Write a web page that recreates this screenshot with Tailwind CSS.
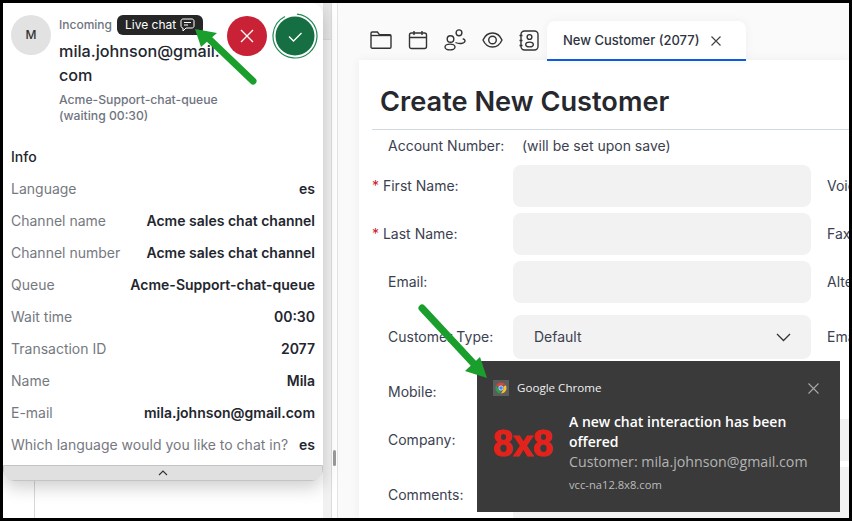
<!DOCTYPE html>
<html lang="en">
<head>
  <meta charset="UTF-8" />
  <title>New Customer</title>
  <script src="https://cdn.jsdelivr.net/npm/@tailwindcss/browser@4"></script>
</head>
<body class="bg-black font-['Inter',sans-serif]">
  <div class="relative flex w-[852px] h-[521px] box-border border-[3px] border-black overflow-hidden bg-white">

    <!-- behind the chat panel -->
    <div class="relative flex w-[329px] h-full shrink-0 border-r border-[#dcdcdc]">
      <div class="w-[32px] h-full border-r border-[#d8d8d8]"></div>
      <div class="flex-1"></div>
      <div class="flex flex-col w-[8px] h-full bg-[#f1f1f1]">
        <div class="h-[37px] bg-[#e6e6e6] border-b border-[#dcdcdc]"></div>
      </div>
    </div>
    <div class="relative w-[6px] h-full shrink-0 border-r border-[#e4e4e4]">
      <div class="absolute left-[1px] top-[447px] w-[3px] h-[16px] bg-[#9a9a9a] rounded-sm"></div>
    </div>

    <!-- main area -->
    <div class="flex flex-col flex-1 min-w-0 bg-[#fafafa]">
      <div class="relative z-10 flex items-end h-[58px] shrink-0 pl-[32px]">
        <div class="flex items-center gap-[16px] h-[36px] mb-[3px] text-[#333]">
          <svg width="22" height="20" viewBox="0 0 22 20" fill="none" stroke="currentColor" stroke-width="1.4"><path d="M1 17V3.2C1 2.5 1.5 2 2.2 2h5.2l2 2.6h10.4c.7 0 1.2.5 1.2 1.2V17c0 .7-.5 1.2-1.2 1.2H2.200C1.500 18.200 1 17.700 1 17Z"/><path d="M1 5.500h20"/></svg>
          <svg width="20" height="20" viewBox="0 0 20 20" fill="none" stroke="currentColor" stroke-width="1.4"><rect x="1.500" y="3" width="17" height="15.500" rx="2"/><path d="M1.500 7.500h17M6 1v4M14 1v4"/></svg>
          <svg width="22" height="22" viewBox="0 0 22 22" fill="none" stroke="currentColor" stroke-width="1.400"><circle cx="15" cy="3.800" r="2.900"/><circle cx="6.500" cy="10" r="3.300"/><ellipse cx="6" cy="18" rx="5" ry="2.900"/><path d="M11.500 13.500c3.500 1.800 9 1.300 9.500-1.500.2-1.200-1-2-2.300-2.300"/></svg>
          <svg width="21" height="16" viewBox="0 0 21 16" fill="none" stroke="currentColor" stroke-width="1.400"><path d="M1 8c2-4.500 5.500-7 9.500-7s7.500 2.500 9.500 7c-2 4.500-5.500 7-9.500 7S3 12.500 1 8Z"/><circle cx="10.500" cy="8" r="3.800"/></svg>
          <svg width="20" height="21" viewBox="0 0 20 21" fill="none" stroke="currentColor" stroke-width="1.400"><rect x="2" y="1" width="17" height="19" rx="3.500"/><circle cx="10.500" cy="7" r="2.400"/><ellipse cx="10.500" cy="14.500" rx="3.800" ry="2.400"/><path d="M.500 5.500h3M.500 10.500h3M.500 15.500h3"/></svg>
        </div>
        <div class="flex items-center w-[199px] h-[40px] ml-[8px] pl-[16px] pt-[1px] bg-white rounded-t-lg border-b-2 border-[#0b5ce0] shadow-[0_0_10px_rgba(0,0,0,0.05)]">
          <span class="text-[13px] font-medium text-[#2e3440] whitespace-nowrap">New Customer (2077)</span>
          <svg class="ml-[10px]" width="12" height="12" viewBox="0 0 12 12" fill="none" stroke="#444" stroke-width="1.200"><path d="M1.500 1.500l9 9M10.500 1.500l-9 9"/></svg>
        </div>
      </div>

      <div class="flex-1 min-h-0 -mt-px ml-[21px] pl-[13px] bg-white shadow-[0_0_10px_rgba(0,0,0,0.06)] overflow-hidden text-sm text-[#3b4150]">
        <div class="h-[70px] pt-[24px] pl-[8px] border-b border-[#d3dae0]">
          <h1 class="text-[27.2px] leading-[36px] font-semibold text-[#26282e]">Create New Customer</h1>
        </div>
        <div class="flex items-center h-[35px] pb-[4px] pl-[16px] whitespace-nowrap">
          <span class="w-[134px] shrink-0">Account Number:</span><span>(will be set upon save)</span>
        </div>

        <div class="flex items-center h-[42px] whitespace-nowrap">
          <span class="w-[141px] shrink-0"><span class="text-[#c8202f]">*</span> First Name:</span>
          <div class="w-[298px] h-full shrink-0 rounded-lg bg-[#f2f2f2]"></div>
          <span class="ml-[16px] shrink-0">Voice Phone:</span>
        </div>
        <div class="flex items-center h-[42px] mt-[6px] whitespace-nowrap">
          <span class="w-[141px] shrink-0"><span class="text-[#c8202f]">*</span> Last Name:</span>
          <div class="w-[298px] h-full shrink-0 rounded-lg bg-[#f2f2f2]"></div>
          <span class="ml-[16px] shrink-0">Fax:</span>
        </div>
        <div class="flex items-center h-[42px] mt-[6px] whitespace-nowrap">
          <span class="w-[141px] shrink-0 pl-[16px]">Email:</span>
          <div class="w-[298px] h-full shrink-0 rounded-lg bg-[#f2f2f2]"></div>
          <span class="ml-[16px] shrink-0">Alternate Email:</span>
        </div>
        <div class="flex items-center h-[44px] mt-[12px] whitespace-nowrap">
          <span class="w-[141px] shrink-0 pl-[16px]">Customer Type:</span>
          <div class="flex items-center justify-between w-[298px] h-full shrink-0 pl-[21px] pr-[20px] rounded-lg bg-[#f2f2f2]">
            <span>Default</span>
            <svg width="15" height="9" viewBox="0 0 15 9" fill="none" stroke="#333" stroke-width="1.300"><path d="M1 1l6.500 6.500L14 1"/></svg>
          </div>
          <span class="ml-[16px] shrink-0">Email Opt Out:</span>
        </div>
        <div class="flex items-center h-[42px] mt-[12px] whitespace-nowrap">
          <span class="w-[141px] shrink-0 pl-[16px]">Mobile:</span>
          <div class="w-[298px] h-full shrink-0 rounded-lg bg-[#f2f2f2]"></div>
        </div>
        <div class="flex items-center h-[42px] mt-[6px] whitespace-nowrap">
          <span class="w-[141px] shrink-0 pl-[16px]">Company:</span>
          <div class="flex-1 h-full rounded-l-lg bg-[#f2f2f2]"></div>
        </div>
        <div class="flex items-center h-[56px] mt-[6px] whitespace-nowrap">
          <span class="w-[141px] shrink-0 pl-[16px]">Comments:</span>
          <div class="flex-1 h-full rounded-l-lg bg-[#f2f2f2]"></div>
        </div>
      </div>
    </div>

    <!-- incoming chat panel -->
    <div class="absolute left-0 top-0 z-20 w-[320px] h-[478px] flex flex-col bg-white rounded-r-xl rounded-bl-xl shadow-[0_6px_18px_rgba(0,0,0,0.2)] overflow-hidden">
      <div class="flex-1 pl-[8px] pr-[8px]">
        <div class="flex pt-[12px]">
          <div class="flex items-center justify-center w-[40px] h-[40px] shrink-0 rounded-full bg-[#e2e2e2] text-xs font-medium text-[#333]">M</div>
          <div class="ml-[8px]">
            <div class="flex items-center h-[20px]">
              <span class="text-xs font-medium text-[#6f7480]">Incoming</span>
              <span class="flex items-center gap-[4px] h-[20px] ml-[5px] px-[8px] rounded-md bg-[#262626] text-xs text-white">Live chat
                <svg width="15" height="14" viewBox="0 0 15 14" fill="none" stroke="#fff" stroke-width="1"><path d="M3 1h9c1.100 0 2 .9 2 2v5c0 1.100-.9 2-2 2H6l-3 3v-3c-1.100 0-2-.9-2-2V3c0-1.100.9-2 2-2Z"/><path d="M4 4.500h7M4 7h4"/></svg>
              </span>
            </div>
            <div class="mt-[4px] text-[16.2px] leading-[24px] font-medium text-[#23262e]">mila.johnson@gmail.<br>com</div>
            <div class="mt-[5px] text-[12.2px] leading-[16px] font-medium text-[#6f7480]">Acme-Support-chat-queue<br>(waiting 00:30)</div>
          </div>
        </div>
        <div class="mt-[23px] text-sm leading-[20px] font-medium text-[#23262e]">Info</div>
        <dl class="mt-[6px] text-sm">
          <div class="flex items-center justify-between h-[32px]"><dt class="text-[#75797f]">Language</dt><dd class="font-semibold text-[#23262e]">es</dd></div>
          <div class="flex items-center justify-between h-[32px]"><dt class="text-[#75797f]">Channel name</dt><dd class="font-semibold text-[#23262e]">Acme sales chat channel</dd></div>
          <div class="flex items-center justify-between h-[32px]"><dt class="text-[#75797f]">Channel number</dt><dd class="font-semibold text-[#23262e]">Acme sales chat channel</dd></div>
          <div class="flex items-center justify-between h-[32px]"><dt class="text-[#75797f]">Queue</dt><dd class="font-semibold text-[#23262e]">Acme-Support-chat-queue</dd></div>
          <div class="flex items-center justify-between h-[32px]"><dt class="text-[#75797f]">Wait time</dt><dd class="font-semibold text-[#23262e]">00:30</dd></div>
          <div class="flex items-center justify-between h-[32px]"><dt class="text-[#75797f]">Transaction ID</dt><dd class="font-semibold text-[#23262e]">2077</dd></div>
          <div class="flex items-center justify-between h-[32px]"><dt class="text-[#75797f]">Name</dt><dd class="font-semibold text-[#23262e]">Mila</dd></div>
          <div class="flex items-center justify-between h-[32px]"><dt class="text-[#75797f]">E-mail</dt><dd class="font-semibold text-[#23262e]">mila.johnson@gmail.com</dd></div>
          <div class="flex items-center justify-between h-[32px]"><dt class="text-[#75797f]">Which language would you like to chat in?</dt><dd class="font-semibold text-[#23262e]">es</dd></div>
        </dl>
      </div>
      <div class="flex items-center justify-center h-[16px] shrink-0 bg-[#e0e0e0] border border-[#c4c4c4] rounded-b-lg">
        <svg width="10" height="6" viewBox="0 0 10 6" fill="none" stroke="#333" stroke-width="1.100"><path d="M1 5l4-4 4 4"/></svg>
      </div>

      <!-- accept / reject -->
      <div class="absolute left-[224px] top-[13px] flex items-center justify-center w-[40px] h-[40px] rounded-full bg-[#c92135]">
        <svg width="16" height="16" viewBox="0 0 16 16" fill="none" stroke="#fff" stroke-width="1.300"><path d="M2 2l12 12M14 2L2 14"/></svg>
      </div>
      <svg class="absolute left-[269px] top-[10px]" width="46" height="46" viewBox="0 0 46 46">
        <circle cx="23" cy="23" r="19.500" fill="#166f42"/>
        <circle cx="23" cy="23" r="22" fill="none" stroke="#1f8a55" stroke-width="1.200" stroke-dasharray="125 13" transform="rotate(-85 23 23)"/>
        <path d="M17 23.500l4.500 4.500 8-8" fill="none" stroke="#fff" stroke-width="1.300"/>
      </svg>
    </div>

    <!-- desktop notification -->
    <div class="absolute left-[474px] top-[358px] z-20 w-[363px] h-[151px] bg-[#3a3a3a] font-['Open_Sans',sans-serif]">
      <div class="flex items-center h-[16px] mt-[19px] pl-[16px] pr-[21px]">
        <svg width="16" height="16" viewBox="0 0 16 16">
          <rect width="16" height="16" fill="#5c5c5c"/>
          <path d="M8 2.500a5.500 5.500 0 0 1 4.760 2.750H8a2.750 2.750 0 0 0-2.600 1.850L3.200 5.300A5.500 5.500 0 0 1 8 2.500Z" fill="#dd4437"/>
          <path d="M12.760 5.250A5.500 5.500 0 0 1 8 13.500l2.380-4.120a2.750 2.750 0 0 0 .1-2.880Z" fill="#fbc02d"/>
          <path d="M3.200 5.300 5.600 9.400A2.750 2.750 0 0 0 8 10.750l-.9 2.680A5.500 5.500 0 0 1 3.200 5.300Z" fill="#2f9e4f"/>
          <circle cx="8" cy="8" r="2.200" fill="#4285f4" stroke="#fff" stroke-width=".7"/>
        </svg>
        <span class="ml-[8px] text-[11.6px] text-[#f0f0f0]">Google Chrome</span>
        <svg class="ml-auto" width="11" height="11" viewBox="0 0 11 11" fill="none" stroke="#a8a8a8" stroke-width="1.100"><path d="M.5.500l10 10M10.500.500l-10 10"/></svg>
      </div>
      <div class="flex mt-[16px] pl-[16px]">
        <div class="flex items-center w-[76px] h-[64px] shrink-0 font-['Liberation_Sans',sans-serif] text-[36px] font-bold text-[#e3231b] [-webkit-text-stroke:1px_#e3231b]">8x8</div>
        <div>
          <div class="text-[14px] leading-[20px] font-semibold text-white w-[240px]">A new chat interaction has been offered</div>
          <div class="text-[14.2px] leading-[20px] text-[#b4b4b4] whitespace-nowrap">Customer: mila.johnson@gmail.com</div>
          <div class="mt-[5px] text-[11.2px] leading-[16px] text-[#bcbcbc]">vcc-na12.8x8.com</div>
        </div>
      </div>
    </div>

    <!-- green annotation arrows -->
    <svg class="absolute left-[-3px] top-[-3px] z-30 pointer-events-none" width="852" height="521" viewBox="0 0 852 521">
      <path d="M253 81 208 38" fill="none" stroke="#1a9e2c" stroke-width="7" stroke-linecap="round"/>
      <path d="M195 29 217 33 201 47Z" fill="#1a9e2c"/>
      <path d="M422 308 474 364" fill="none" stroke="#1a9e2c" stroke-width="7" stroke-linecap="round"/>
      <path d="M487 378 465 371 480 357Z" fill="#1a9e2c"/>
    </svg>
  </div>
</body>
</html>
